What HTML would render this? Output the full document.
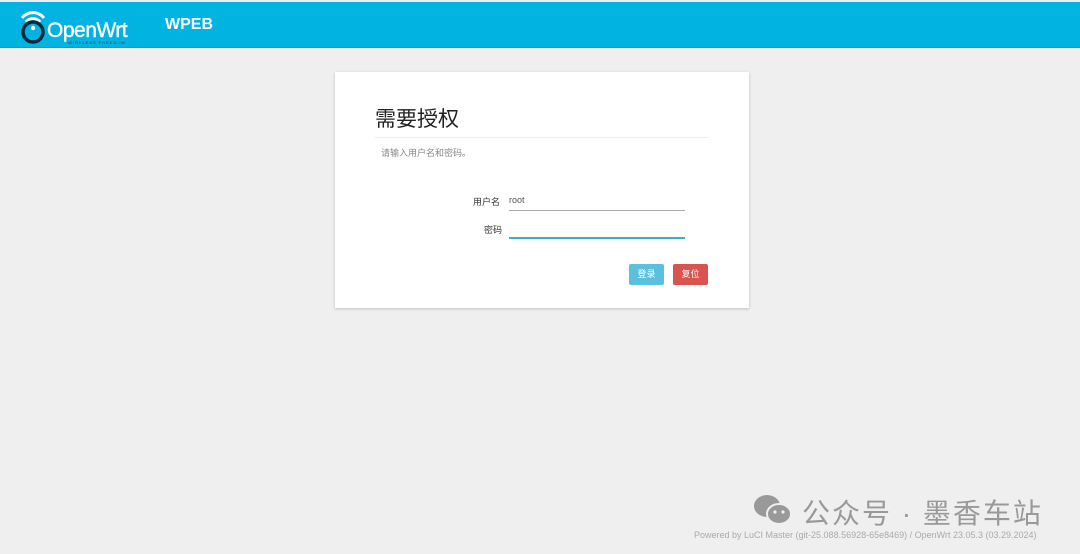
<!DOCTYPE html>
<html><head><meta charset="utf-8"><style>
*{margin:0;padding:0;box-sizing:border-box}
body{width:1080px;height:554px;background:#efefef;font-family:"Liberation Sans","Noto Sans CJK SC",sans-serif;position:relative;overflow:hidden}
.hdr{position:absolute;left:0;top:2px;width:1080px;height:46px;background:#00b3e0;border-bottom:1px solid #06a3cc}
.card{position:absolute;left:335px;top:72px;width:414px;height:236px;background:#fff;box-shadow:0 1px 3px rgba(0,0,0,.2)}
.abs{position:absolute}
</style></head><body>
<div class="hdr">
<svg class="abs" style="left:17px;top:5px" width="32" height="38" viewBox="0 0 32 38">
<path d="M5 11 A14 14 0 0 1 27 11" stroke="#fff" stroke-width="3" fill="none"/>
<path d="M9 15 A9 9 0 0 1 23 15" stroke="#fff" stroke-width="3" fill="none"/>
<circle cx="16" cy="25" r="10" stroke="#0a2a3a" stroke-width="3.5" fill="none"/>
<circle cx="16" cy="21" r="2.2" fill="#fff"/>
</svg>
<div class="abs" style="left:47px;top:17px;color:#fff;font-size:21px;letter-spacing:-0.5px;-webkit-text-stroke:0.4px #fff">OpenWrt</div>
<div class="abs" style="left:68px;top:38px;color:#1a4a66;font-size:4px;letter-spacing:1px">WIRELESS FREEDOM</div>
<div class="abs" style="left:165px;top:14px;color:#fff;font-size:16px;font-weight:bold">WPEB</div>
</div>
<div class="card">
<div class="abs" style="left:40px;top:31px;font-size:21px;color:#222">需要授权</div>
<div class="abs" style="left:40px;top:65px;width:333px;height:1px;background:#eee"></div>
<div class="abs" style="left:46px;top:74px;font-size:9px;color:#888">请输入用户名和密码。</div>
<div class="abs" style="left:138px;top:123px;font-size:9px;color:#333">用户名</div>
<div class="abs" style="left:174px;top:123px;font-size:9px;color:#555">root</div>
<div class="abs" style="left:174px;top:138px;width:176px;height:1px;background:#aaa"></div>
<div class="abs" style="left:149px;top:151px;font-size:9px;color:#333">密码</div>
<div class="abs" style="left:174px;top:165px;width:176px;height:2px;background:#3bb1c3"></div>
<div class="abs" style="left:294px;top:192px;width:35px;height:21px;background:#5bc0de;border-radius:2px;color:#fff;font-size:9px;line-height:21px;text-align:center">登录</div>
<div class="abs" style="left:338px;top:192px;width:35px;height:21px;background:#d9534f;border-radius:2px;color:#fff;font-size:9px;line-height:21px;text-align:center">复位</div>
</div>
<svg class="abs" style="left:752px;top:493px" width="42" height="34" viewBox="0 0 42 34">
<ellipse cx="15" cy="13" rx="13" ry="11" fill="#999"/>
<ellipse cx="27" cy="21" rx="12" ry="10" fill="#999" stroke="#efefef" stroke-width="2"/>
<circle cx="23" cy="19" r="1.6" fill="#efefef"/><circle cx="31" cy="19" r="1.6" fill="#efefef"/>
</svg>
<div class="abs" style="left:802px;top:492px;font-size:28px;color:#999;letter-spacing:2px">公众号 · 墨香车站</div>
<div class="abs" style="left:694px;top:530px;font-size:9px;color:#aaa">Powered by LuCI Master (git-25.088.56928-65e8469) / OpenWrt 23.05.3 (03.29.2024)</div>
</body></html>
